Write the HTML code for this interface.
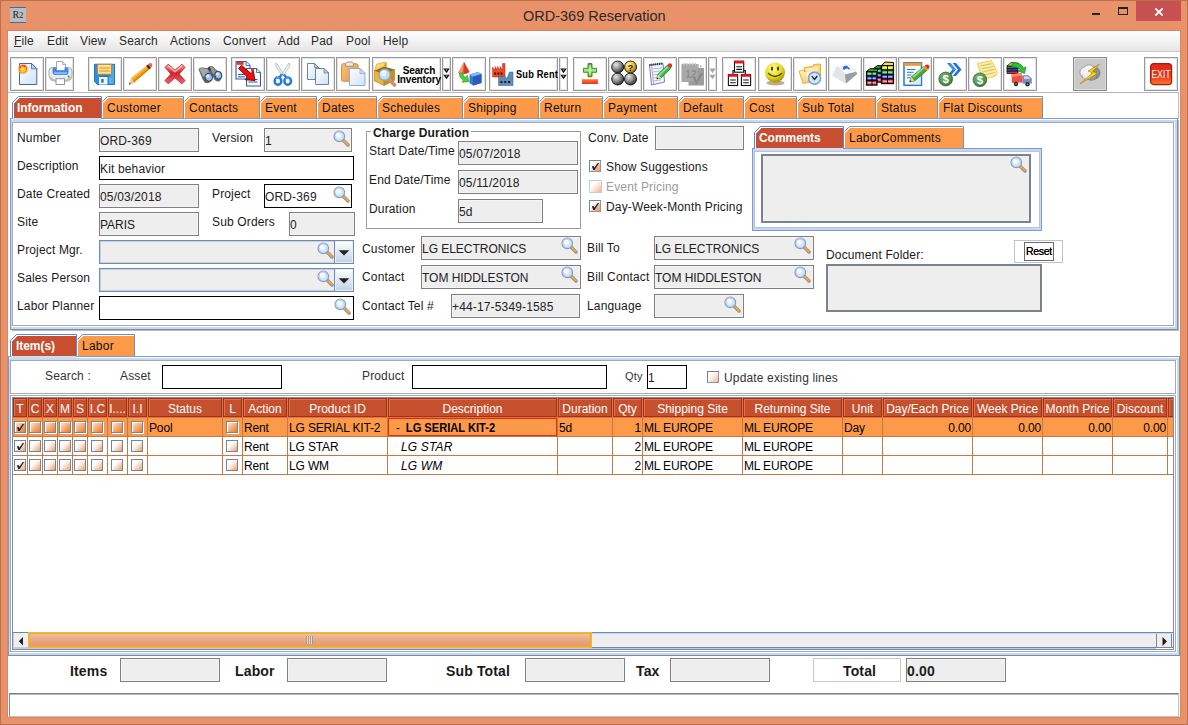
<!DOCTYPE html><html><head><meta charset="utf-8"><title>ORD-369 Reservation</title><style>
*{box-sizing:border-box;margin:0;padding:0}
html,body{width:1188px;height:725px;overflow:hidden;background:#E99168;font-family:"Liberation Sans",sans-serif;font-size:12px;color:#1a1a1a;letter-spacing:0.15px}
.a{position:absolute}
.t{position:absolute;white-space:nowrap;line-height:14px;height:14px}
.f{position:absolute;background:#EEEEEE;border:1px solid #808080;box-shadow:inset 0 0 0 1px #f4f4f4;white-space:nowrap;overflow:hidden;padding:5px 0 0 0px;line-height:14px;color:#222}
.fw{position:absolute;background:#fff;border:1px solid #000;white-space:nowrap;overflow:hidden;padding:5px 0 0 0px;line-height:14px;color:#222}
.fb{position:absolute;background:#EEEEEE;border:1px solid #7189ab;box-shadow:inset 0 0 0 1px #c3d3e8;}
.tb{position:absolute;top:57px;height:34px;background:#fff;border:1px solid #9a9a9a;box-shadow:inset 0 0 0 1px #e4e4e4}
.cb{position:absolute;width:12px;height:12px;border:1px solid #6f869e;background:linear-gradient(135deg,#fde4d2 8%,#f9c29b 35%,#f39a57 70%,#ef8232 95%);box-shadow:1px 1px 0 #fff,inset 1px 1px 0 #fff}
.cbw{position:absolute;width:12px;height:12px;border:1px solid #6f869e;background:linear-gradient(135deg,#ffffff 30%,#fdebdf 50%,#f8c4a0 75%,#f3a36c 98%);box-shadow:inset 1px 1px 0 #fff}
.cbf{position:absolute;width:12px;height:12px;border:1px solid #6f8399;border-right-color:#8796aa;border-bottom-color:#8796aa;background:linear-gradient(135deg,#ffffff 25%,#fde3d0 50%,#f6b080 75%,#f19555 100%);box-shadow:inset 1px 1px 0 #fff}
.hd{position:absolute;top:398px;height:19px;background:#C5502E;border:1px solid #8c3a22;box-shadow:inset 1px 1px 0 #f5693a;color:#fff;font-size:12px;line-height:20px;text-align:center;white-space:nowrap;overflow:hidden;letter-spacing:0}
.c{position:absolute;height:19px;line-height:23px;letter-spacing:-0.15px;font-size:12px;color:#000;white-space:nowrap;overflow:hidden}
.b{font-weight:bold}
</style></head><body>
<svg width="0" height="0" style="position:absolute"><defs><linearGradient id="gdoc" x1="0" y1="0" x2="1" y2="1"><stop offset="0" stop-color="#ffffff"/><stop offset="1" stop-color="#cfe1f5"/></linearGradient><linearGradient id="gblue" x1="0" y1="0" x2="1" y2="0"><stop offset="0" stop-color="#2a95e8"/><stop offset=".6" stop-color="#1878cf"/><stop offset="1" stop-color="#5cb6f2"/></linearGradient><radialGradient id="gball" cx=".35" cy=".3" r=".75"><stop offset="0" stop-color="#e8e8e8"/><stop offset=".55" stop-color="#8a8a8a"/><stop offset="1" stop-color="#2a2a2a"/></radialGradient><radialGradient id="gyball" cx=".35" cy=".3" r=".75"><stop offset="0" stop-color="#fff2a0"/><stop offset=".6" stop-color="#f0b820"/><stop offset="1" stop-color="#7a5a10"/></radialGradient><radialGradient id="gsmile" cx=".4" cy=".3" r=".8"><stop offset="0" stop-color="#fdfb9a"/><stop offset=".55" stop-color="#e9d91c"/><stop offset="1" stop-color="#8a7a08"/></radialGradient><radialGradient id="gcoin" cx=".4" cy=".35" r=".75"><stop offset="0" stop-color="#7fb878"/><stop offset=".7" stop-color="#4d8a48"/><stop offset="1" stop-color="#2f6a2c"/></radialGradient><linearGradient id="gx" x1="0" y1="0" x2="0" y2="1"><stop offset="0" stop-color="#f7b0b3"/><stop offset=".45" stop-color="#d81e26"/><stop offset="1" stop-color="#e86a70"/></linearGradient><linearGradient id="gplus" x1="0" y1="0" x2="0" y2="1"><stop offset="0" stop-color="#3f9e1e"/><stop offset=".5" stop-color="#b9e89a"/><stop offset="1" stop-color="#3f9e1e"/></linearGradient><linearGradient id="gminus" x1="0" y1="0" x2="0" y2="1"><stop offset="0" stop-color="#ff7a4a"/><stop offset="1" stop-color="#e8321c"/></linearGradient><linearGradient id="gclip" x1="0" y1="0" x2="1" y2="1"><stop offset="0" stop-color="#f8c07a"/><stop offset="1" stop-color="#ec9a3e"/></linearGradient><linearGradient id="gfold" x1="0" y1="0" x2="0" y2="1"><stop offset="0" stop-color="#fff3c0"/><stop offset="1" stop-color="#f6cf6a"/></linearGradient><linearGradient id="gexit" x1="0" y1="0" x2="0" y2="1"><stop offset="0" stop-color="#e02818"/><stop offset=".6" stop-color="#ec3a1a"/><stop offset="1" stop-color="#f8782a"/></linearGradient></defs></svg>
<div class="a" style="left:0;top:0;width:1188px;height:725px;border:1px solid #b9714f;background:#E99168"></div>
<div class="t" style="left:523px;top:7px;font-size:14.5px;letter-spacing:0;line-height:18px;height:18px;color:#2a2a2a">ORD-369 Reservation</div>
<div class="a" style="left:10px;top:7px;width:16px;height:16px;background:#b9bcc0;border-top:1px solid #3a6ea8;border-bottom:1px solid #3a6ea8;font-family:'Liberation Serif',serif;font-size:10px;line-height:14px;color:#222;text-align:center">R<span style="font-size:8px">2</span></div>
<div class="a" style="left:1136px;top:1px;width:45px;height:20px;background:#C75050"></div>
<svg class="a" style="left:1136px;top:1px" width="45" height="20"><path d="M19.300 7.300l7.400 7.200M26.700 7.300l-7.400 7.200" stroke="#fff" stroke-width="1.800"/></svg>
<div class="a" style="left:1118px;top:7px;width:10px;height:8px;border:1px solid #222;border-top-width:2px"></div>
<div class="a" style="left:1092px;top:13px;width:8px;height:2px;background:#222"></div>
<div class="a" style="left:7px;top:30px;width:1174px;height:688px;background:#fff;border:1px solid #dc865f"></div>
<div class="a" style="left:8px;top:31px;width:1172px;height:21px;background:linear-gradient(#ffffff,#e6e6e6);border-bottom:1px solid #c8c8c8"></div>
<div class="t" style="left:14px;top:34px;font-size:12px;color:#2a2a2a"><u>F</u>ile</div>
<div class="t" style="left:47px;top:34px;font-size:12px;color:#2a2a2a">Edit</div>
<div class="t" style="left:80px;top:34px;font-size:12px;color:#2a2a2a">View</div>
<div class="t" style="left:119px;top:34px;font-size:12px;color:#2a2a2a">Search</div>
<div class="t" style="left:170px;top:34px;font-size:12px;color:#2a2a2a">Actions</div>
<div class="t" style="left:223px;top:34px;font-size:12px;color:#2a2a2a">Convert</div>
<div class="t" style="left:278px;top:34px;font-size:12px;color:#2a2a2a">Add</div>
<div class="t" style="left:311px;top:34px;font-size:12px;color:#2a2a2a">Pad</div>
<div class="t" style="left:346px;top:34px;font-size:12px;color:#2a2a2a">Pool</div>
<div class="t" style="left:383px;top:34px;font-size:12px;color:#2a2a2a">Help</div>
<div class="a" style="left:8px;top:92px;width:1171px;height:1px;background:#b5b5b5"></div>
<div class="a" style="left:1178px;top:93px;width:1px;height:26px;background:#c2c2c2"></div>
<div class="tb" style="left:10px;width:34px;background:#fff;"><svg class="a" style="left:4.0px;top:4.0px;overflow:visible" width="24" height="24" viewBox="0 0 24 24"><path d="M4.500 1.500h12.300l5 5v16h-17.300z" fill="url(#gdoc)" stroke="#4a64a0"/><path d="M16.500 1.500v5.300h5.300z" fill="#b9d2ee" stroke="#4a64a0" stroke-width=".8"/><circle cx="8" cy="7" r="5.300" fill="#f89a5a" opacity=".55"/><circle cx="8" cy="7" r="3.900" fill="#f03a1a"/><path d="M8 3.200l1 2.400 2.500-.8-.9 2.400 2.200 1.200-2.400.8.500 2.500-2.300-1.200-1.600 2-.6-2.500-2.600.1 1.500-2-1.900-1.700 2.500-.5-.1-2.500 2.100 1.400z" fill="#f9c21c"/><circle cx="8" cy="7" r="1.600" fill="#ffe95a"/></svg></div>
<div class="tb" style="left:45px;width:29px;background:#fff;"><svg class="a" style="left:1.5px;top:4.0px;overflow:visible" width="24" height="24" viewBox="0 0 24 24"><path d="M8.500 -.5h6l3 3v6h-9z" fill="#fff" stroke="#9a9a9a" stroke-width=".9"/><path d="M14.500 -.5v3h3" fill="#e6e6e6" stroke="#9a9a9a" stroke-width=".7"/><path d="M1 9q0-3.500 3.500-3.500h4v3h9v-3h3q3.500 0 3.500 3.500v4q0 6-6 6h-11q-6 0-6-6z" fill="#e9ecee" stroke="#9aa0a6" stroke-width=".9"/><path d="M4.500 7q0-1.500 2-1.500h2v3h8v-3h2q2 0 2 1.500v3q0 3-3 3h-10q-3 0-3-3z" fill="#3f86ea"/><path d="M5.500 10.200h14q-.5 2-2.500 2h-9q-2 0-2.500-2z" fill="#8ebcf6"/><path d="M2 14q4 4.500 10.500 4.500t10.500-4.500v1q-1 4.500-6 4.500h-9q-5 0-6-4.500z" fill="#b9bec4"/><rect x="8" y="16.700" width="8.500" height="5.800" fill="#fff" stroke="#8a8a8a" stroke-width=".9"/><circle cx="20.600" cy="14.600" r="1" fill="#22a838"/></svg></div>
<div class="tb" style="left:88px;width:34px;background:#fff;"><svg class="a" style="left:4.0px;top:4.0px;overflow:visible" width="24" height="24" viewBox="0 0 24 24"><path d="M1.500 2.300h20v20.200h-17l-3-3z" fill="url(#gblue)" stroke="#1466b8" stroke-width=".9"/><rect x="4.500" y="2.300" width="14" height="10" fill="#fce2a6" stroke="#c98428" stroke-width="1.100"/><path d="M6.200 6h10.600M6.200 9h10.600" stroke="#f2a630" stroke-width="1.500"/><rect x="6" y="15" width="8.500" height="7.500" fill="#eef5fc"/><rect x="8.300" y="17" width="2.300" height="3.600" fill="#1a6ad0"/><rect x="16" y="15" width="2.500" height="7" fill="#6fc0f5" opacity=".7"/></svg></div>
<div class="tb" style="left:123px;width:34px;background:#fff;"><svg class="a" style="left:4.0px;top:4.0px;overflow:visible" width="24" height="24" viewBox="0 0 24 24"><path d="M2.500 20l5-9-3 10z" fill="#d0d0d0" opacity=".7"/><path d="M1 22.800l2.200-6.800L19.500 3l3 3.200L5.800 20.800z" fill="#f5a010"/><path d="M3.200 16L19.500 3l1 1.100L4.400 17.600z" fill="#fbc04a"/><path d="M5 19.300L21.500 5.200l1 1L5.800 20.800z" fill="#d8860a"/><path d="M1 22.800l2.200-6.800 2.600 4.800z" fill="#f0cfa8"/><path d="M1 22.800l.8-2.500 1.100 1.800z" fill="#3a3a3a"/><path d="M18.200 4l1.800-1.500 3 3.200-1.800 1.500z" fill="#2a2a2a"/><path d="M20 2.500l1.500-1.200q1.800-.8 2.600 1l.2 1.800-1.300 1.600z" fill="#f2643a"/></svg></div>
<div class="tb" style="left:158px;width:34px;background:#fff;"><svg class="a" style="left:4.0px;top:4.0px;overflow:visible" width="24" height="24" viewBox="0 0 24 24"><path d="M5.200 2.200L12 8.200l6.800-6 3.200 3.200L16 12l6 6.600-3.200 3.200L12 15.800l-6.800 6L2 18.600 8 12 2 5.400z" fill="url(#gx)" stroke="#c0202a" stroke-width=".9" stroke-linejoin="round"/><path d="M5.300 3.800L12 9.800l6.700-6" stroke="#fbd5d6" stroke-width="1.300" fill="none" opacity=".8"/></svg></div>
<div class="tb" style="left:193px;width:34px;background:#fff;"><svg class="a" style="left:4.0px;top:4.0px;overflow:visible" width="24" height="24" viewBox="0 0 24 24"><path d="M.5 7.500q1-2.500 4-2l5 .8 1.500-1.800q2-1 4 0l2 2.300 6 4.500q2 2.500.5 5.500l-2 2.500q-3 1-5-1.500l-1.500-3-1.500 1.500-1 3.500q-2.500 2.500-6 .8l-2-3.500z" fill="#63666a"/><path d="M1.500 7.500q1-1.500 3-1.200l5 .9 3.500 6.300-2 3-6-2z" fill="#a4a8ac"/><path d="M11.500 5q1.500-.8 3 0l1.800 2 5 4-3 2-4-2z" fill="#92969a"/><path d="M9.500 6.200l2-1.500 1.500 3-1 1.500z" fill="#3a3c3e"/><ellipse cx="10.700" cy="15.200" rx="3.700" ry="4" fill="#8ec3f4" stroke="#3e4144" stroke-width="1.100" transform="rotate(-20 10.700 15.200)"/><ellipse cx="20.300" cy="13.200" rx="3.400" ry="3.800" fill="#8ec3f4" stroke="#3e4144" stroke-width="1.100" transform="rotate(-20 20.300 13.200)"/><circle cx="9.800" cy="14" r="1.500" fill="#d6ebfc"/><circle cx="19.500" cy="12" r="1.400" fill="#d6ebfc"/></svg></div>
<div class="tb" style="left:231px;width:34px;background:#fff;"><svg class="a" style="left:4.0px;top:4.0px;overflow:visible" width="24" height="24" viewBox="0 0 24 24"><path d="M0 -.5h10l4 4v13.500h-14z" fill="#f6f9fd" stroke="#3a5aa0" stroke-width="1.100"/><path d="M10 -.5v4h4" fill="#dde8f5" stroke="#3a5aa0" stroke-width=".8"/><rect x=".6" y="0" width="7" height="2.800" fill="#f03020"/><path d="M2 12.500h9M2 14.800h7" stroke="#3a5aa0" stroke-width="1"/><path d="M10.500 6.500h10l4 4v13.500h-14z" fill="#f6f9fd" stroke="#3a5aa0" stroke-width="1.100"/><path d="M20.500 6.500v4h4" fill="#dde8f5" stroke="#3a5aa0" stroke-width=".8"/><rect x="15" y="7" width="3" height="2.500" fill="#f03020"/><path d="M12.500 17.500h9M12.500 20h9M12.500 13h5" stroke="#3a5aa0" stroke-width="1"/><path d="M2.500 6.500l3-3.200 9.500 8.200 2.300-2.500 1.700 9.500-9.800-.8 2.400-2.600z" fill="#f40c0c" stroke="#5a0808" stroke-width=".9" stroke-linejoin="round"/></svg></div>
<div class="tb" style="left:266px;width:34px;background:#fff;"><svg class="a" style="left:4.0px;top:4.0px;overflow:visible" width="24" height="24" viewBox="0 0 24 24"><path d="M5.200 .8q-1.200 1-.3 3.500l6.200 9.500 1.800-1.500z" fill="#eceef0" stroke="#a9adb3" stroke-width=".7"/><path d="M18.200 .8q1.200 1 .3 3.500l-6.200 9.500-1.800-1.500z" fill="#f6f7f8" stroke="#a9adb3" stroke-width=".7"/><circle cx="11.800" cy="12.300" r=".9" fill="#8a8e94"/><path d="M10.600 12.500l-2.500 3.500M13 12.500l2.500 3.500" stroke="#2a7ee0" stroke-width="2.200"/><ellipse cx="7" cy="19.200" rx="3.300" ry="3.600" fill="none" stroke="#1f7ae0" stroke-width="2.500"/><ellipse cx="16.700" cy="19.200" rx="3.300" ry="3.600" fill="none" stroke="#1f7ae0" stroke-width="2.500"/><path d="M4.500 17.500q1.500-2.500 4-1.500M14.200 17.500q1.500-2.500 4-1.500" stroke="#7fb8f4" stroke-width="1" fill="none"/></svg></div>
<div class="tb" style="left:301px;width:34px;background:#fff;"><svg class="a" style="left:4.0px;top:4.0px;overflow:visible" width="24" height="24" viewBox="0 0 24 24"><path d="M1.500 1.500h7l4 4v12h-11z" fill="url(#gdoc)" stroke="#5a74a8" stroke-width=".9"/><path d="M8.500 1.500v4h4z" fill="#b9d2ee" stroke="#5a74a8" stroke-width=".7"/><path d="M9.500 6.500h8.500l4.500 4.500v11.500h-13z" fill="url(#gdoc)" stroke="#5a74a8" stroke-width=".9"/><path d="M18 6.500v4.500h4.500z" fill="#b9d2ee" stroke="#5a74a8" stroke-width=".7"/></svg></div>
<div class="tb" style="left:336px;width:34px;background:#fff;"><svg class="a" style="left:4.0px;top:4.0px;overflow:visible" width="24" height="24" viewBox="0 0 24 24"><rect x=".5" y="1.700" width="16.600" height="17.600" rx="1.800" fill="url(#gclip)" stroke="#c98a3a" stroke-width=".9"/><path d="M4.500 4.200v-2.500l1.500-1.700h5l1.500 1.700v2.500z" fill="#eceae4" stroke="#8a8474" stroke-width=".8"/><path d="M8.500 6.500h10.500l5 5v12h-15.500z" fill="url(#gdoc)" stroke="#8aa0d8" stroke-width=".9"/><path d="M19 6.500v5h5z" fill="#cfe0f5" stroke="#8aa0d8" stroke-width=".7"/></svg></div>
<div class="tb" style="left:372px;width:69px;background:#fff;"><svg class="a" style="left:1px;top:3px" width="24" height="26" viewBox="0 0 24 26"><path d="M0.500 9.500L10 13.500V24.500L0.500 20Z" fill="#ecb736"/><path d="M10 13.500L20.500 8.500V19.500L10 24.500Z" fill="#c98f1c"/><path d="M0.500 9.500L10 5.500L20.500 8.500L10 13.500Z" fill="#9a6a10"/><path d="M0.500 9.500L2.500 3L11.500 1L10 5.500Z" fill="#f8d868" stroke="#c99a2a" stroke-width=".5"/><path d="M10 5.500L11.500 1L13 2.500L12.500 6.200Z" fill="#d8a32a"/><path d="M0.500 9.500L10 13.500V24.500L0.500 20ZM10 13.500L20.500 8.500V19.500L10 24.500" fill="none" stroke="#a87a14" stroke-width=".6"/><path d="M14.500 17.800l6 6.200" stroke="#9a9da3" stroke-width="3.600" stroke-linecap="round"/><path d="M15.600 19l4.800 4.900" stroke="#f08a3a" stroke-width="2.200" stroke-linecap="round"/><circle cx="10.600" cy="13.700" r="5.600" fill="#bfe0f2" stroke="#8fa6bd" stroke-width="1.400"/><circle cx="9.400" cy="12.400" r="2.800" fill="#e8f6fd"/></svg><div class="a b" style="left:23px;top:8px;width:46px;font-size:10px;line-height:9px;color:#000;text-align:center;letter-spacing:-0.150px">Search<br>Inventory</div></div>
<div class="tb" style="left:442px;width:9px;background:#fff;"><svg class="a" style="left:0px;top:10px" width="7" height="12" viewBox="0 0 7 12"><path d="M0.300 0.500h6.400l-3.200 4.700zM0.300 6.700h6.400l-3.200 4.500z" fill="#111"/><path d="M2.600 1.400h1.800l-.9 1.300zM2.600 7.600h1.800l-.9 1.300z" fill="#fff" opacity=".8"/></svg></div>
<div class="tb" style="left:452px;width:34px;background:#fff;"><svg class="a" style="left:4.0px;top:4.0px;overflow:visible" width="24" height="24" viewBox="0 0 24 24"><path d="M7 0l5.500 10q-5.500 3.500-11.500 1z" fill="#f05a3a"/><path d="M7 0l5.500 10q-2.500 1.800-5.500 2z" fill="#d83a1e"/><path d="M7 0L1 11q2 1 4 1.200z" fill="#fa9a7a"/><path d="M12.500 12.500l8.500-2.500 3.500 2v9l-8.500 2.500-3.500-2.500z" fill="#3a78d8"/><path d="M12.500 12.500l8.500-2.500 3.500 2-8.500 2.800z" fill="#86b6f4"/><path d="M16 14.800l8.500-2.800v9l-8.500 2.500z" fill="#2a5cb8"/><path d="M2.500 11q-.5 5 4 7l-1.500 2.200 7-.5-1.800-6.500-1.700 2.300q-2.500-1.500-2.500-4.500z" fill="#4ccc3a" stroke="#2a9a22" stroke-width=".6"/></svg></div>
<div class="tb" style="left:489px;width:69px;background:#fff;"><svg class="a" style="left:2px;top:5px" width="24" height="23" viewBox="0 0 24 23"><path d="M0.500 14V4l2.500 3V3.500l2.500 3.500V3.500l2.500 3.500V3.500l2.500 3.500V0.500h2.500V14z" fill="#f4461f" stroke="#b82a12" stroke-width=".5"/><path d="M2.300 10.500h1.800M5.500 10.500h1.800M8.700 10.500h1.800" stroke="#111" stroke-width="1.900"/><path d="M6.500 22.500V12.500l2.800 3v-3l2.800 3v-3l2.800 3L17.500 9h3.500V22.500z" fill="#5f8db5" stroke="#2f5f88" stroke-width=".5"/><path d="M8.500 19h1.900M12.300 19h1.900M16.100 19h1.900" stroke="#111" stroke-width="1.900"/></svg><div class="a b" style="left:22px;top:9px;width:50px;text-align:center;font-size:10.500px;line-height:14px;color:#000;white-space:nowrap;letter-spacing:0.200px;transform:scaleX(.88)">Sub Rent</div></div>
<div class="tb" style="left:559px;width:9px;background:#fff;"><svg class="a" style="left:0px;top:10px" width="7" height="12" viewBox="0 0 7 12"><path d="M0.300 0.500h6.400l-3.200 4.700zM0.300 6.700h6.400l-3.200 4.500z" fill="#111"/><path d="M2.600 1.400h1.800l-.9 1.300zM2.600 7.600h1.800l-.9 1.300z" fill="#fff" opacity=".8"/></svg></div>
<div class="tb" style="left:573px;width:34px;background:#fff;"><svg class="a" style="left:4.0px;top:4.0px;overflow:visible" width="24" height="24" viewBox="0 0 24 24"><path d="M10 1.600h4v4.700h4.500v4h-4.500v4.500h-4v-4.500h-4.500v-4h4.500z" fill="url(#gplus)" stroke="#2f8a14" stroke-width=".9"/><path d="M11.300 2.800h1.400v10.800h-1.400z" fill="#dcf5cb" opacity=".8"/><rect x="4" y="17.200" width="16" height="4.800" fill="url(#gminus)"/></svg></div>
<div class="tb" style="left:608px;width:34px;background:#fff;"><svg class="a" style="left:4.0px;top:4.0px;overflow:visible" width="24" height="24" viewBox="0 0 24 24"><circle cx="4.7" cy="17" r="6" fill="url(#gball)" stroke="#111" stroke-width=".9"/><circle cx="17.5" cy="17" r="6" fill="url(#gball)" stroke="#111" stroke-width=".9"/><circle cx="4.7" cy="5" r="6" fill="url(#gball)" stroke="#111" stroke-width=".9"/><circle cx="17.5" cy="5" r="6" fill="url(#gyball)" stroke="#111" stroke-width=".9"/><text x="17.600" y="8.600" font-size="9.500" font-weight="bold" text-anchor="middle" fill="#1a1a1a" font-family="Liberation Sans">?</text></svg></div>
<div class="tb" style="left:643px;width:34px;background:#fff;"><svg class="a" style="left:4.0px;top:4.0px;overflow:visible" width="24" height="24" viewBox="0 0 24 24"><path d="M1.500 3l13.500-1.500 1.500 18.500-13 3z" fill="#f4f7fc" stroke="#6a7fc8" stroke-width="1"/><path d="M4.200 7l10-1.200M4.500 10l10-1.200M4.800 13l6-.8M5 16l5-.6M5.200 19l8-1.200" stroke="#9ab6ea" stroke-width=".9"/><path d="M3.600 3.500l2 19" stroke="#ee8a8a" stroke-width=".9"/><path d="M1.500 3l13.500-1.500" stroke="#2a2a2a" stroke-width="2.200" stroke-dasharray="1 .9"/><path d="M8.800 17l1-4.600 9.700-9.400 3.300 3.300-9.600 9.600z" fill="#3db54a" stroke="#1e7a2a" stroke-width=".7"/><path d="M10.500 12.800l8.700-8.500 1.200 1.200-8.800 8.600z" fill="#8fe08a"/><path d="M19.500 3l1.400-1.400q1.400-.8 2.600.4t.5 2.600l-1.200 1.700z" fill="#e8281e"/><path d="M8.800 17l1-4.600 3.400 3.500z" fill="#f0d9b0"/><path d="M8.800 17l.4-1.700 1.300 1.200z" fill="#222"/></svg></div>
<div class="tb" style="left:678px;width:29px;background:#fff;"><svg class="a" style="left:1.5px;top:4.0px;overflow:visible" width="24" height="24" viewBox="0 0 24 24"><rect x=".5" y="2" width="17" height="18" fill="#a6a6a6"/><rect x="7.500" y="6" width="15.500" height="17.500" fill="#9c9c9c"/><rect x="1.500" y="4.500" width="15" height="14.500" fill="#a9a9a9"/><path d="M3 3.500v-2.500M5.800 3.500v-2.500M8.600 3.500v-2.500M11.400 3.500v-2.500M14.200 3.500v-2.500M17 5v-2.500M19.800 5.500v-2.500" stroke="#c4c4c4" stroke-width="1.500"/><text x="10" y="15.500" font-size="10" fill="#8e8e8e" font-family="Liberation Sans" text-anchor="middle" font-weight="bold">12</text><path d="M12.500 15l3 5.500 5.500-9.500" stroke="#8a8a8a" stroke-width="2.200" fill="none"/></svg></div>
<div class="tb" style="left:708px;width:9px;background:#fff;"><svg class="a" style="left:0px;top:10px" width="7" height="12" viewBox="0 0 7 12"><path d="M0.300 0.500h6.400l-3.200 4.700zM0.300 6.700h6.400l-3.200 4.500z" fill="#a8a8a8"/></svg></div>
<div class="tb" style="left:722px;width:34px;background:#fff;"><svg class="a" style="left:4.0px;top:4.0px;overflow:visible" width="24" height="24" viewBox="0 0 24 24"><path d="M12 8v2.500M6 13v-4.500h12.300v4.500" stroke="#111" fill="none" stroke-width="1.200"/><rect x="7.5" y="-0.8" width="9.200" height="11" fill="#fff" stroke="#111" stroke-width="1.100"/><rect x="7.5" y="-1.1" width="9.200" height="2.600" fill="#f0141e"/><path d="M9.3 4.7h5.600M9.3 7.3999999999999995h5.600" stroke="#111" stroke-width="1.100"/><rect x="1.4" y="12.5" width="9.200" height="11" fill="#fff" stroke="#111" stroke-width="1.100"/><rect x="1.4" y="12.2" width="9.200" height="2.600" fill="#f0141e"/><path d="M3.2 18.0h5.600M3.2 20.7h5.600" stroke="#111" stroke-width="1.100"/><rect x="14.4" y="12.5" width="9.200" height="11" fill="#fff" stroke="#111" stroke-width="1.100"/><rect x="14.4" y="12.2" width="9.200" height="2.600" fill="#f0141e"/><path d="M16.2 18.0h5.600M16.2 20.7h5.600" stroke="#111" stroke-width="1.100"/></svg></div>
<div class="tb" style="left:758px;width:34px;background:#fff;"><svg class="a" style="left:4.0px;top:4.0px;overflow:visible" width="24" height="24" viewBox="0 0 24 24"><ellipse cx="12.500" cy="21" rx="9" ry="2.600" fill="#8a6a28" opacity=".55"/><circle cx="12" cy="10.500" r="10" fill="url(#gsmile)"/><ellipse cx="9" cy="6.700" rx="1.100" ry="2.100" fill="#4a4208"/><ellipse cx="15" cy="6.700" rx="1.100" ry="2.100" fill="#4a4208"/><path d="M5.500 11.500q6.500 6 13 0" stroke="#4a4208" stroke-width="1.400" fill="none" stroke-linecap="round"/></svg></div>
<div class="tb" style="left:793px;width:34px;background:#fff;"><svg class="a" style="left:4.0px;top:4.0px;overflow:visible" width="24" height="24" viewBox="0 0 24 24"><path d="M6 5.500l9-1 .5-2 7-.500v15l-14 3z" fill="#f8d878" stroke="#d8a020" stroke-width=".8"/><path d="M1 9l4.500-.8 1 1.500 12-2 1.500 11-15 2.800z" fill="url(#gfold)" stroke="#e0a428" stroke-width=".8"/><path d="M8 6.500l12-1.500v10l-11 3z" fill="#fff6cf" opacity=".7"/><circle cx="16.500" cy="16.200" r="6" fill="#e4f2fd" stroke="#7f9ed8" stroke-width="1.700"/><circle cx="16.500" cy="16.200" r="4.300" fill="#cfe6fa"/><path d="M13.800 14.200l2.700 3.200 2.800-3.400" stroke="#1a1a2a" stroke-width="1.300" fill="none"/></svg></div>
<div class="tb" style="left:828px;width:34px;background:#fff;"><svg class="a" style="left:4.0px;top:4.0px;overflow:visible" width="24" height="24" viewBox="0 0 24 24"><path d="M-.5 13.500l4.500-9 12-2.500 8.500 9.500-11.500 10z" fill="#c4c7cb"/><path d="M4.500 4l11.500-2.200 6.500 8.200-10.500 2.500z" fill="#fafafa"/><path d="M-.5 13.500l5-9.500 7.500 8.500 1 9z" fill="#e2e4e7"/><path d="M12 12.500l10.500-2.500 2 1.500-11.500 10z" fill="#9a9da3"/><path d="M9.500 7l1-2.800 3.200-.6 3.800 3.400-1.900.4-1-1-2.600.5-.4 1.100z" fill="#2a72e0"/></svg></div>
<div class="tb" style="left:863px;width:34px;background:#fff;"><svg class="a" style="left:4.0px;top:4.0px;overflow:visible" width="24" height="24" viewBox="0 0 24 24"><rect x="6" y="6.5" width="8" height="4.600" fill="#1f9a2a" stroke="#0a0a0a" stroke-width="1.200"/><rect x="7.2" y="8.0" width="5.6" height="1.600" fill="#9ae89a" opacity=".85"/><rect x="6" y="11" width="8" height="4.600" fill="#2a3ad8" stroke="#0a0a0a" stroke-width="1.200"/><rect x="7.2" y="12.5" width="5.6" height="1.600" fill="#b8c0ff" opacity=".85"/><rect x="6" y="15.5" width="8" height="4.600" fill="#d82a2a" stroke="#0a0a0a" stroke-width="1.200"/><rect x="7.2" y="17.0" width="5.6" height="1.600" fill="#ffc0c0" opacity=".85"/><path d="M5.500 6.500l4-3 5 .5-3.500 3z" fill="#1f9a2a" stroke="#0a0a0a" stroke-width="1"/><rect x="-1.5" y="9.5" width="10.5" height="4.600" fill="#1f9a2a" stroke="#0a0a0a" stroke-width="1.200"/><rect x="-0.30000000000000004" y="11.0" width="8.1" height="1.600" fill="#a8eea8" opacity=".85"/><rect x="-1.5" y="14" width="10.5" height="4.600" fill="#2a3ad8" stroke="#0a0a0a" stroke-width="1.200"/><rect x="-0.30000000000000004" y="15.5" width="8.1" height="1.600" fill="#c0c6ff" opacity=".85"/><rect x="-1.5" y="18.5" width="10.5" height="4.600" fill="#d82a2a" stroke="#0a0a0a" stroke-width="1.200"/><rect x="-0.30000000000000004" y="20.0" width="8.1" height="1.600" fill="#ffc6c6" opacity=".85"/><path d="M-1.500 9.500l3.500-2.800 8 .3-1 2.500z" fill="#2fae3a" stroke="#0a0a0a" stroke-width="1"/><rect x="13.5" y="3.5" width="12" height="4.600" fill="#d8d020" stroke="#0a0a0a" stroke-width="1.200"/><rect x="14.7" y="5.0" width="9.6" height="1.600" fill="#fffbb0" opacity=".85"/><rect x="13.5" y="8" width="12" height="4.600" fill="#1f9a2a" stroke="#0a0a0a" stroke-width="1.200"/><rect x="14.7" y="9.5" width="9.6" height="1.600" fill="#a8eea8" opacity=".85"/><rect x="13.5" y="12.5" width="12" height="4.600" fill="#2a3ad8" stroke="#0a0a0a" stroke-width="1.200"/><rect x="14.7" y="14.0" width="9.6" height="1.600" fill="#c0c6ff" opacity=".85"/><rect x="13.5" y="17" width="12" height="4.600" fill="#d82a2a" stroke="#0a0a0a" stroke-width="1.200"/><rect x="14.7" y="18.5" width="9.6" height="1.600" fill="#ffc6c6" opacity=".85"/><path d="M13.500 3.500l3.500-3.500 8.500.5v3z" fill="#e8e040" stroke="#0a0a0a" stroke-width="1"/><path d="M4 9.800v13.500M19.500 3.800v18" stroke="#0a0a0a" stroke-width="1"/></svg></div>
<div class="tb" style="left:898px;width:34px;background:#fff;"><svg class="a" style="left:4.0px;top:4.0px;overflow:visible" width="24" height="24" viewBox="0 0 24 24"><rect x="1" y=".8" width="17.500" height="22.500" fill="#f8fbff" stroke="#2a7ad8" stroke-width="1.500"/><rect x="1" y=".8" width="17.500" height="3" fill="#f8962a"/><path d="M10 14l8 0v8.500h-8z" fill="#d6e4f8" opacity=".7"/><path d="M4 7.500h8.500M4 10.300h6.500M4 13h4.500M4 15.800h3.500" stroke="#2a7ad8" stroke-width="1"/><path d="M6.600 20l1.700-5.200L21 4.500l3.200 3.700L11.500 19z" fill="#4aa83a" stroke="#2a6a22" stroke-width=".7"/><path d="M9.600 14.300L21 4.500l1.100 1.200-11.500 10z" fill="#9ade8a"/><path d="M20.300 5l1.500-1.300 3.300 3.800-1.500 1.300z" fill="#e8a020"/><path d="M21.800 3.700l1.200-1q1.700-.8 2.900.6t.2 2.900l-1 1.300z" fill="#e8281e"/><path d="M6.600 20l1.700-5.200 3.200 4.200z" fill="#f2cf8a"/><path d="M6.600 20l.7-2.100 1.300 1.500z" fill="#222"/></svg></div>
<div class="tb" style="left:933px;width:34px;background:#fff;"><svg class="a" style="left:4.0px;top:4.0px;overflow:visible" width="24" height="24" viewBox="0 0 24 24"><path d="M9 1h3.500l5.500 6.500-5.500 6.500h-3.500l5.500-6.500z" fill="#1f74e0"/><path d="M14.500 1h3.500l5.500 6.500-5.500 6.500h-3.500l5.500-6.500z" fill="#1f74e0"/><path d="M10.500 1.500h1.500l5 6-1.200 1.300z" fill="#6aa8f6" opacity=".7"/><circle cx="7.7" cy="17" r="6.900" fill="url(#gcoin)" stroke="#3a7236" stroke-width=".8"/><text x="7.7" y="21.1" font-size="11.500" font-weight="bold" text-anchor="middle" fill="#fff" font-family="Liberation Sans">$</text></svg></div>
<div class="tb" style="left:968px;width:34px;background:#fff;"><svg class="a" style="left:4.0px;top:4.0px;overflow:visible" width="24" height="24" viewBox="0 0 24 24"><path d="M4.500 1.500l14-2.800 6 12-2.500 3.500-12.500 3z" fill="#fcf0a0" stroke="#f0c23a" stroke-width=".9"/><path d="M7.500 4l11-2.400M8.500 7l11.500-2.500M9.500 10l12-2.600M10.500 13l11.500-2.500" stroke="#d8c070" stroke-width="1.100"/><circle cx="6.9" cy="17.8" r="6.900" fill="url(#gcoin)" stroke="#3a7236" stroke-width=".8"/><text x="6.9" y="21.9" font-size="11.500" font-weight="bold" text-anchor="middle" fill="#fff" font-family="Liberation Sans">$</text></svg></div>
<div class="tb" style="left:1003px;width:34px;background:#fff;"><svg class="a" style="left:4.0px;top:4.0px;overflow:visible" width="24" height="24" viewBox="0 0 24 24"><rect x="-1" y="4" width="11" height="2.600" fill="#1f9a2a" stroke="#0a0a0a" stroke-width=".7"/><rect x="-1" y="6.600" width="11" height="2.600" fill="#2a3ad8" stroke="#0a0a0a" stroke-width=".7"/><rect x="-1" y="9.200" width="11" height="2.400" fill="#d82a2a" stroke="#0a0a0a" stroke-width=".7"/><path d="M-1 4l4-3.500 7 .5 1 2-1 1z" fill="#d8d020" stroke="#0a0a0a" stroke-width=".7"/><path d="M4 2q8-3 11.500 4l2.500-1-1.500 6.500-6.500-2.500 2.300-1q-2.500-4-8.300-3z" fill="#2fc03a" stroke="#147a1e" stroke-width=".6"/><path d="M3.500 12.500l10-1.500 1 9.500-10.500.5z" fill="#f0503a"/><path d="M3.500 12.500l10-1.500.3 2.500-10.200 1.500z" fill="#fa8a78"/><path d="M14 13.500l6-.5 3.800 3.500v5l-9.300.3z" fill="#8088c0"/><path d="M16 14.500l3.800-.3 2.600 2.600-6.200.4z" fill="#d0dcf4"/><circle cx="8" cy="22" r="2.200" fill="#2a2a2a"/><circle cx="19.500" cy="22.300" r="2.200" fill="#2a2a2a"/><circle cx="8" cy="22" r=".8" fill="#aaa"/><circle cx="19.500" cy="22.300" r=".8" fill="#aaa"/></svg></div>
<div class="tb" style="left:1073px;width:34px;background:#c9c9c9;border-color:#8a8a8a;box-shadow:inset 0 0 0 1px #dcdcdc;"><svg class="a" style="left:4.0px;top:4.0px;overflow:visible" width="24" height="24" viewBox="0 0 24 24"><ellipse cx="16.500" cy="11" rx="5.500" ry="6" fill="#8e8e8e" stroke="#6a6a6a" stroke-width=".6"/><ellipse cx="13.500" cy="14.500" rx="5" ry="3.800" fill="#9a9a9a" stroke="#6a6a6a" stroke-width=".6"/><ellipse cx="7" cy="10.500" rx="5" ry="5.500" fill="#f6f6f6" stroke="#7a7a7a" stroke-width=".6"/><ellipse cx="11" cy="6.800" rx="4.800" ry="4" fill="#f4f4f4" stroke="#7a7a7a" stroke-width=".6"/><ellipse cx="9" cy="13.500" rx="5" ry="4" fill="#e4e4e4" stroke="#7a7a7a" stroke-width=".6"/><ellipse cx="8.500" cy="10" rx="5" ry="5" fill="#f2f2f2"/><ellipse cx="11" cy="7.500" rx="4" ry="3.500" fill="#f4f4f4"/><path d="M21.500 2L10 9L14.500 11L2 21.800L19.500 11.500L14.500 9.500Z" fill="#fad01c" stroke="#b08410" stroke-width=".7" stroke-linejoin="round"/></svg></div>
<div class="tb" style="left:1144px;width:34px;background:#fff;"><svg class="a" style="left:4.0px;top:4.0px;overflow:visible" width="24" height="24" viewBox="0 0 24 24"><rect x="1.600" y="1.600" width="21" height="21" rx="3.200" fill="url(#gexit)" stroke="#a81a10" stroke-width="1.200"/><text x="12.100" y="16" font-size="10" text-anchor="middle" fill="#fff" font-family="Liberation Sans" textLength="19" lengthAdjust="spacingAndGlyphs">EXIT</text></svg></div>
<div class="a" style="left:10px;top:118px;width:1168px;height:212px;background:#c5daf2;border-top:1px solid #7b9ad6;border-left:1px solid #7b9ad6;border-right:1px solid #7a8ea8;border-bottom:1px solid #7a8ea8"></div>
<div class="a" style="left:11px;top:119px;width:1166px;height:1px;background:#fff"></div>
<div class="a" style="left:1178px;top:120px;width:1px;height:211px;background:#b4b9c2"></div>
<div class="a" style="left:12px;top:330px;width:1167px;height:1px;background:#b4b9c2"></div>
<div class="a" style="left:12px;top:122px;width:1163px;height:205px;background:#fff"></div>
<div class="a" style="left:12px;top:122px;width:1162px;height:204px;border:1px solid #a9a9a9;background:#fff"></div>
<svg class="a" style="left:12px;top:96px" width="90" height="22"><path d="M2 22 V7.500 L7.500 2 H89 V22 Z" fill="#C74E2E"/><path d="M1.500 22 V7 L7 1.500 H89" fill="none" stroke="#fff" stroke-width="1"/><path d="M0.500 22 V6.500 L6.500 0.500 H89.5 V22" fill="none" stroke="#5f86d6" stroke-width="1"/></svg>
<div class="a" style="left:13px;top:118px;width:88px;height:2px;background:#cfe0f5"></div>
<div class="t b" style="left:17px;top:100px;font-size:12px;color:#fff;line-height:16px;height:16px;letter-spacing:-0.05px">Information</div>
<svg class="a" style="left:102px;top:96px" width="82" height="22"><path d="M1 22 V7 L6.500 1.500 H81 V22 Z" fill="#FD9A49"/><path d="M0.500 22 V6.500 L6 1.500 H81" fill="none" stroke="#fff" stroke-width="1"/><path d="M0.500 5.500 L5.500 0.500 H81.5 V22" fill="none" stroke="#7a8ea8" stroke-width="1"/></svg>
<div class="t" style="left:107px;top:100px;font-size:12px;color:#111;line-height:16px;height:16px;letter-spacing:0.25px">Customer</div>
<svg class="a" style="left:184px;top:96px" width="76" height="22"><path d="M1 22 V7 L6.500 1.500 H75 V22 Z" fill="#FD9A49"/><path d="M0.500 22 V6.500 L6 1.500 H75" fill="none" stroke="#fff" stroke-width="1"/><path d="M0.500 5.500 L5.500 0.500 H75.5 V22" fill="none" stroke="#7a8ea8" stroke-width="1"/></svg>
<div class="t" style="left:189px;top:100px;font-size:12px;color:#111;line-height:16px;height:16px;letter-spacing:0.25px">Contacts</div>
<svg class="a" style="left:260px;top:96px" width="57" height="22"><path d="M1 22 V7 L6.500 1.500 H56 V22 Z" fill="#FD9A49"/><path d="M0.500 22 V6.500 L6 1.500 H56" fill="none" stroke="#fff" stroke-width="1"/><path d="M0.500 5.500 L5.500 0.500 H56.5 V22" fill="none" stroke="#7a8ea8" stroke-width="1"/></svg>
<div class="t" style="left:265px;top:100px;font-size:12px;color:#111;line-height:16px;height:16px;letter-spacing:0.25px">Event</div>
<svg class="a" style="left:317px;top:96px" width="60" height="22"><path d="M1 22 V7 L6.500 1.500 H59 V22 Z" fill="#FD9A49"/><path d="M0.500 22 V6.500 L6 1.500 H59" fill="none" stroke="#fff" stroke-width="1"/><path d="M0.500 5.500 L5.500 0.500 H59.5 V22" fill="none" stroke="#7a8ea8" stroke-width="1"/></svg>
<div class="t" style="left:322px;top:100px;font-size:12px;color:#111;line-height:16px;height:16px;letter-spacing:0.25px">Dates</div>
<svg class="a" style="left:377px;top:96px" width="86" height="22"><path d="M1 22 V7 L6.500 1.500 H85 V22 Z" fill="#FD9A49"/><path d="M0.500 22 V6.500 L6 1.500 H85" fill="none" stroke="#fff" stroke-width="1"/><path d="M0.500 5.500 L5.500 0.500 H85.5 V22" fill="none" stroke="#7a8ea8" stroke-width="1"/></svg>
<div class="t" style="left:382px;top:100px;font-size:12px;color:#111;line-height:16px;height:16px;letter-spacing:0.25px">Schedules</div>
<svg class="a" style="left:463px;top:96px" width="76" height="22"><path d="M1 22 V7 L6.500 1.500 H75 V22 Z" fill="#FD9A49"/><path d="M0.500 22 V6.500 L6 1.500 H75" fill="none" stroke="#fff" stroke-width="1"/><path d="M0.500 5.500 L5.500 0.500 H75.5 V22" fill="none" stroke="#7a8ea8" stroke-width="1"/></svg>
<div class="t" style="left:468px;top:100px;font-size:12px;color:#111;line-height:16px;height:16px;letter-spacing:0.25px">Shipping</div>
<svg class="a" style="left:539px;top:96px" width="64" height="22"><path d="M1 22 V7 L6.500 1.500 H63 V22 Z" fill="#FD9A49"/><path d="M0.500 22 V6.500 L6 1.500 H63" fill="none" stroke="#fff" stroke-width="1"/><path d="M0.500 5.500 L5.500 0.500 H63.5 V22" fill="none" stroke="#7a8ea8" stroke-width="1"/></svg>
<div class="t" style="left:544px;top:100px;font-size:12px;color:#111;line-height:16px;height:16px;letter-spacing:0.25px">Return</div>
<svg class="a" style="left:603px;top:96px" width="75" height="22"><path d="M1 22 V7 L6.500 1.500 H74 V22 Z" fill="#FD9A49"/><path d="M0.500 22 V6.500 L6 1.500 H74" fill="none" stroke="#fff" stroke-width="1"/><path d="M0.500 5.500 L5.500 0.500 H74.5 V22" fill="none" stroke="#7a8ea8" stroke-width="1"/></svg>
<div class="t" style="left:608px;top:100px;font-size:12px;color:#111;line-height:16px;height:16px;letter-spacing:0.25px">Payment</div>
<svg class="a" style="left:678px;top:96px" width="66" height="22"><path d="M1 22 V7 L6.500 1.500 H65 V22 Z" fill="#FD9A49"/><path d="M0.500 22 V6.500 L6 1.500 H65" fill="none" stroke="#fff" stroke-width="1"/><path d="M0.500 5.500 L5.500 0.500 H65.5 V22" fill="none" stroke="#7a8ea8" stroke-width="1"/></svg>
<div class="t" style="left:683px;top:100px;font-size:12px;color:#111;line-height:16px;height:16px;letter-spacing:0.25px">Default</div>
<svg class="a" style="left:744px;top:96px" width="53" height="22"><path d="M1 22 V7 L6.500 1.500 H52 V22 Z" fill="#FD9A49"/><path d="M0.500 22 V6.500 L6 1.500 H52" fill="none" stroke="#fff" stroke-width="1"/><path d="M0.500 5.500 L5.500 0.500 H52.5 V22" fill="none" stroke="#7a8ea8" stroke-width="1"/></svg>
<div class="t" style="left:749px;top:100px;font-size:12px;color:#111;line-height:16px;height:16px;letter-spacing:0.25px">Cost</div>
<svg class="a" style="left:797px;top:96px" width="79" height="22"><path d="M1 22 V7 L6.500 1.500 H78 V22 Z" fill="#FD9A49"/><path d="M0.500 22 V6.500 L6 1.500 H78" fill="none" stroke="#fff" stroke-width="1"/><path d="M0.500 5.500 L5.500 0.500 H78.5 V22" fill="none" stroke="#7a8ea8" stroke-width="1"/></svg>
<div class="t" style="left:802px;top:100px;font-size:12px;color:#111;line-height:16px;height:16px;letter-spacing:0.25px">Sub Total</div>
<svg class="a" style="left:876px;top:96px" width="62" height="22"><path d="M1 22 V7 L6.500 1.500 H61 V22 Z" fill="#FD9A49"/><path d="M0.500 22 V6.500 L6 1.500 H61" fill="none" stroke="#fff" stroke-width="1"/><path d="M0.500 5.500 L5.500 0.500 H61.5 V22" fill="none" stroke="#7a8ea8" stroke-width="1"/></svg>
<div class="t" style="left:881px;top:100px;font-size:12px;color:#111;line-height:16px;height:16px;letter-spacing:0.25px">Status</div>
<svg class="a" style="left:938px;top:96px" width="105" height="22"><path d="M1 22 V7 L6.500 1.500 H104 V22 Z" fill="#FD9A49"/><path d="M0.500 22 V6.500 L6 1.500 H104" fill="none" stroke="#fff" stroke-width="1"/><path d="M0.500 5.500 L5.500 0.500 H104.5 V22" fill="none" stroke="#7a8ea8" stroke-width="1"/></svg>
<div class="t" style="left:943px;top:100px;font-size:12px;color:#111;line-height:16px;height:16px;letter-spacing:0.25px">Flat Discounts</div>
<div class="t" style="left:17px;top:131px;">Number</div>
<div class="f" style="left:99px;top:128px;width:100px;height:24px;">ORD-369</div>
<div class="t" style="left:212px;top:131px;">Version</div>
<div class="f" style="left:264px;top:128px;width:88px;height:24px;">1</div>
<svg class="a" style="left:333px;top:130px" width="17" height="17" viewBox="0 0 17 17"><path d="M9.500 9.500L15 15" stroke="#8a8f9c" stroke-width="3.400" stroke-linecap="round"/><path d="M10.800 10.600L14.800 14.600" stroke="#f5a040" stroke-width="2.100" stroke-linecap="round"/><circle cx="6.300" cy="6.300" r="5.300" fill="#d4e9fb" stroke="#8d9cba" stroke-width="1.200"/><circle cx="6.300" cy="6.300" r="4.200" fill="none" stroke="#b4d3f2" stroke-width="1.100"/><circle cx="5.300" cy="5.300" r="2.500" fill="#f4fbff"/></svg>
<div class="t" style="left:17px;top:159px;">Description</div>
<div class="fw" style="left:99px;top:156px;width:255px;height:24px;">Kit behavior</div>
<div class="t" style="left:17px;top:187px;">Date Created</div>
<div class="f" style="left:99px;top:184px;width:100px;height:24px;">05/03/2018</div>
<div class="t" style="left:212px;top:187px;">Project</div>
<div class="fw" style="left:264px;top:184px;width:88px;height:24px;">ORD-369</div>
<svg class="a" style="left:333px;top:186px" width="17" height="17" viewBox="0 0 17 17"><path d="M9.500 9.500L15 15" stroke="#8a8f9c" stroke-width="3.400" stroke-linecap="round"/><path d="M10.800 10.600L14.800 14.600" stroke="#f5a040" stroke-width="2.100" stroke-linecap="round"/><circle cx="6.300" cy="6.300" r="5.300" fill="#d4e9fb" stroke="#8d9cba" stroke-width="1.200"/><circle cx="6.300" cy="6.300" r="4.200" fill="none" stroke="#b4d3f2" stroke-width="1.100"/><circle cx="5.300" cy="5.300" r="2.500" fill="#f4fbff"/></svg>
<div class="t" style="left:17px;top:215px;">Site</div>
<div class="f" style="left:99px;top:212px;width:100px;height:24px;letter-spacing:-0.03px">PARIS</div>
<div class="t" style="left:212px;top:215px;">Sub Orders</div>
<div class="f" style="left:289px;top:212px;width:66px;height:24px;">0</div>
<div class="t" style="left:17px;top:243px;">Project Mgr.</div>
<div class="fb" style="left:99px;top:240px;width:255px;height:24px;"></div>
<svg class="a" style="left:317px;top:242px" width="17" height="17" viewBox="0 0 17 17"><path d="M9.500 9.500L15 15" stroke="#8a8f9c" stroke-width="3.400" stroke-linecap="round"/><path d="M10.800 10.600L14.800 14.600" stroke="#f5a040" stroke-width="2.100" stroke-linecap="round"/><circle cx="6.300" cy="6.300" r="5.300" fill="#d4e9fb" stroke="#8d9cba" stroke-width="1.200"/><circle cx="6.300" cy="6.300" r="4.200" fill="none" stroke="#b4d3f2" stroke-width="1.100"/><circle cx="5.300" cy="5.300" r="2.500" fill="#f4fbff"/></svg>
<div class="t" style="left:17px;top:271px;">Sales Person</div>
<div class="fb" style="left:99px;top:268px;width:255px;height:24px;"></div>
<svg class="a" style="left:317px;top:270px" width="17" height="17" viewBox="0 0 17 17"><path d="M9.500 9.500L15 15" stroke="#8a8f9c" stroke-width="3.400" stroke-linecap="round"/><path d="M10.800 10.600L14.800 14.600" stroke="#f5a040" stroke-width="2.100" stroke-linecap="round"/><circle cx="6.300" cy="6.300" r="5.300" fill="#d4e9fb" stroke="#8d9cba" stroke-width="1.200"/><circle cx="6.300" cy="6.300" r="4.200" fill="none" stroke="#b4d3f2" stroke-width="1.100"/><circle cx="5.300" cy="5.300" r="2.500" fill="#f4fbff"/></svg>
<div class="a" style="left:334px;top:240px;width:20px;height:24px;border:1px solid #7189ab;box-shadow:inset 0 0 0 1px #e6eef8;background:linear-gradient(#ffffff,#e3ebf5 45%,#bfd0e6)"></div>
<svg class="a" style="left:338px;top:250px" width="12" height="7"><path d="M0.700 0.300h10.600l-5.300 5.200z" fill="#222"/></svg>
<div class="a" style="left:334px;top:268px;width:20px;height:24px;border:1px solid #7189ab;box-shadow:inset 0 0 0 1px #e6eef8;background:linear-gradient(#ffffff,#e3ebf5 45%,#bfd0e6)"></div>
<svg class="a" style="left:338px;top:278px" width="12" height="7"><path d="M0.700 0.300h10.600l-5.300 5.200z" fill="#222"/></svg>
<div class="t" style="left:17px;top:299px;">Labor Planner</div>
<div class="fw" style="left:99px;top:296px;width:255px;height:24px;"></div>
<svg class="a" style="left:334px;top:298px" width="17" height="17" viewBox="0 0 17 17"><path d="M9.500 9.500L15 15" stroke="#8a8f9c" stroke-width="3.400" stroke-linecap="round"/><path d="M10.800 10.600L14.800 14.600" stroke="#f5a040" stroke-width="2.100" stroke-linecap="round"/><circle cx="6.300" cy="6.300" r="5.300" fill="#d4e9fb" stroke="#8d9cba" stroke-width="1.200"/><circle cx="6.300" cy="6.300" r="4.200" fill="none" stroke="#b4d3f2" stroke-width="1.100"/><circle cx="5.300" cy="5.300" r="2.500" fill="#f4fbff"/></svg>
<div class="a" style="left:366px;top:131px;width:215px;height:98px;border:1px solid #9c9c9c"></div>
<div class="t b" style="left:371px;top:126px;background:#fff;padding:0 2px;">Charge Duration</div>
<div class="t" style="left:369px;top:144px;">Start Date/Time</div>
<div class="f" style="left:458px;top:141px;width:120px;height:24px;">05/07/2018</div>
<div class="t" style="left:369px;top:173px;">End Date/Time</div>
<div class="f" style="left:458px;top:170px;width:120px;height:24px;">05/11/2018</div>
<div class="t" style="left:369px;top:202px;">Duration</div>
<div class="f" style="left:458px;top:199px;width:85px;height:24px;">5d</div>
<div class="t" style="left:588px;top:131px;">Conv. Date</div>
<div class="f" style="left:655px;top:126px;width:89px;height:24px;"></div>
<div class="cbf" style="left:589px;top:160px"></div><svg class="a" style="left:589px;top:160px" width="13" height="13" viewBox="0 0 13 13"><path d="M2.800 6.200L4.800 6.200L5.400 7.700L8.700 2.900L10.100 2.900L5.700 10L4.300 10Z" fill="#17212b"/></svg>
<div class="t" style="left:606px;top:160px;">Show Suggestions</div>
<div class="cbf" style="left:589px;top:180px;width:13px;height:13px;border-color:#b9cde8;box-shadow:inset 1px 1px 0 #fff;background:linear-gradient(135deg,#ffffff 30%,#fde6d6 55%,#f5b48a 100%)"></div>
<div class="t" style="left:606px;top:180px;color:#9b9b9b">Event Pricing</div>
<div class="cbf" style="left:589px;top:200px"></div><svg class="a" style="left:589px;top:200px" width="13" height="13" viewBox="0 0 13 13"><path d="M2.800 6.200L4.800 6.200L5.400 7.700L8.700 2.900L10.100 2.900L5.700 10L4.300 10Z" fill="#17212b"/></svg>
<div class="t" style="left:606px;top:200px;">Day-Week-Month Pricing</div>
<div class="a" style="left:752px;top:148px;width:290px;height:83px;border:1px solid #7b9ad6;background:#c5daf2"></div>
<div class="a" style="left:754px;top:151px;width:286px;height:77px;border:1px solid #b8c4d6;background:#fff"></div>
<svg class="a" style="left:754px;top:126px" width="90" height="22"><path d="M2 22 V7.500 L7.500 2 H89 V22 Z" fill="#C74E2E"/><path d="M1.500 22 V7 L7 1.500 H89" fill="none" stroke="#fff" stroke-width="1"/><path d="M0.500 22 V6.500 L6.500 0.500 H89.5 V22" fill="none" stroke="#5f86d6" stroke-width="1"/></svg>
<div class="a" style="left:755px;top:148px;width:88px;height:2px;background:#cfe0f5"></div>
<div class="t b" style="left:759px;top:130px;font-size:12px;color:#fff;line-height:16px;height:16px;letter-spacing:-0.05px">Comments</div>
<svg class="a" style="left:844px;top:126px" width="120" height="22"><path d="M1 22 V7 L6.500 1.500 H119 V22 Z" fill="#FD9A49"/><path d="M0.500 22 V6.500 L6 1.500 H119" fill="none" stroke="#fff" stroke-width="1"/><path d="M0.500 5.500 L5.500 0.500 H119.5 V22" fill="none" stroke="#7a8ea8" stroke-width="1"/></svg>
<div class="t" style="left:849px;top:130px;font-size:12px;color:#111;line-height:16px;height:16px;letter-spacing:0.25px">LaborComments</div>
<div class="a" style="left:761px;top:154px;width:270px;height:69px;border:2px solid #7b828b;background:#EEEEEE"></div>
<svg class="a" style="left:1010px;top:156px" width="17" height="17" viewBox="0 0 17 17"><path d="M9.500 9.500L15 15" stroke="#8a8f9c" stroke-width="3.400" stroke-linecap="round"/><path d="M10.800 10.600L14.800 14.600" stroke="#f5a040" stroke-width="2.100" stroke-linecap="round"/><circle cx="6.300" cy="6.300" r="5.300" fill="#d4e9fb" stroke="#8d9cba" stroke-width="1.200"/><circle cx="6.300" cy="6.300" r="4.200" fill="none" stroke="#b4d3f2" stroke-width="1.100"/><circle cx="5.300" cy="5.300" r="2.500" fill="#f4fbff"/></svg>
<div class="t" style="left:362px;top:242px;">Customer</div>
<div class="f" style="left:421px;top:236px;width:160px;height:24px;letter-spacing:-0.03px">LG ELECTRONICS</div>
<svg class="a" style="left:561px;top:237px" width="17" height="17" viewBox="0 0 17 17"><path d="M9.500 9.500L15 15" stroke="#8a8f9c" stroke-width="3.400" stroke-linecap="round"/><path d="M10.800 10.600L14.800 14.600" stroke="#f5a040" stroke-width="2.100" stroke-linecap="round"/><circle cx="6.300" cy="6.300" r="5.300" fill="#d4e9fb" stroke="#8d9cba" stroke-width="1.200"/><circle cx="6.300" cy="6.300" r="4.200" fill="none" stroke="#b4d3f2" stroke-width="1.100"/><circle cx="5.300" cy="5.300" r="2.500" fill="#f4fbff"/></svg>
<div class="t" style="left:362px;top:270px;">Contact</div>
<div class="f" style="left:421px;top:265px;width:160px;height:24px;letter-spacing:-0.03px">TOM HIDDLESTON</div>
<svg class="a" style="left:561px;top:266px" width="17" height="17" viewBox="0 0 17 17"><path d="M9.500 9.500L15 15" stroke="#8a8f9c" stroke-width="3.400" stroke-linecap="round"/><path d="M10.800 10.600L14.800 14.600" stroke="#f5a040" stroke-width="2.100" stroke-linecap="round"/><circle cx="6.300" cy="6.300" r="5.300" fill="#d4e9fb" stroke="#8d9cba" stroke-width="1.200"/><circle cx="6.300" cy="6.300" r="4.200" fill="none" stroke="#b4d3f2" stroke-width="1.100"/><circle cx="5.300" cy="5.300" r="2.500" fill="#f4fbff"/></svg>
<div class="t" style="left:362px;top:299px;">Contact Tel #</div>
<div class="f" style="left:451px;top:294px;width:129px;height:24px;">+44-17-5349-1585</div>
<div class="t" style="left:587px;top:241px;">Bill To</div>
<div class="f" style="left:654px;top:236px;width:160px;height:24px;letter-spacing:-0.03px">LG ELECTRONICS</div>
<svg class="a" style="left:794px;top:237px" width="17" height="17" viewBox="0 0 17 17"><path d="M9.500 9.500L15 15" stroke="#8a8f9c" stroke-width="3.400" stroke-linecap="round"/><path d="M10.800 10.600L14.800 14.600" stroke="#f5a040" stroke-width="2.100" stroke-linecap="round"/><circle cx="6.300" cy="6.300" r="5.300" fill="#d4e9fb" stroke="#8d9cba" stroke-width="1.200"/><circle cx="6.300" cy="6.300" r="4.200" fill="none" stroke="#b4d3f2" stroke-width="1.100"/><circle cx="5.300" cy="5.300" r="2.500" fill="#f4fbff"/></svg>
<div class="t" style="left:587px;top:270px;">Bill Contact</div>
<div class="f" style="left:654px;top:265px;width:160px;height:24px;letter-spacing:-0.03px">TOM HIDDLESTON</div>
<svg class="a" style="left:794px;top:266px" width="17" height="17" viewBox="0 0 17 17"><path d="M9.500 9.500L15 15" stroke="#8a8f9c" stroke-width="3.400" stroke-linecap="round"/><path d="M10.800 10.600L14.800 14.600" stroke="#f5a040" stroke-width="2.100" stroke-linecap="round"/><circle cx="6.300" cy="6.300" r="5.300" fill="#d4e9fb" stroke="#8d9cba" stroke-width="1.200"/><circle cx="6.300" cy="6.300" r="4.200" fill="none" stroke="#b4d3f2" stroke-width="1.100"/><circle cx="5.300" cy="5.300" r="2.500" fill="#f4fbff"/></svg>
<div class="t" style="left:587px;top:299px;">Language</div>
<div class="f" style="left:654px;top:294px;width:90px;height:24px;"></div>
<svg class="a" style="left:724px;top:296px" width="17" height="17" viewBox="0 0 17 17"><path d="M9.500 9.500L15 15" stroke="#8a8f9c" stroke-width="3.400" stroke-linecap="round"/><path d="M10.800 10.600L14.800 14.600" stroke="#f5a040" stroke-width="2.100" stroke-linecap="round"/><circle cx="6.300" cy="6.300" r="5.300" fill="#d4e9fb" stroke="#8d9cba" stroke-width="1.200"/><circle cx="6.300" cy="6.300" r="4.200" fill="none" stroke="#b4d3f2" stroke-width="1.100"/><circle cx="5.300" cy="5.300" r="2.500" fill="#f4fbff"/></svg>
<div class="t" style="left:826px;top:248px;">Document Folder:</div>
<div class="a" style="left:1014px;top:240px;width:49px;height:23px;border:1px solid #c4c4c4;background:#fff"></div>
<div class="a" style="left:1024px;top:242px;width:30px;height:19px;border:1px solid #6a6a6a;background:#fff;font-size:10.5px;line-height:17px;text-align:center;color:#000;letter-spacing:-0.3px;text-shadow:0 0 0.3px #000">Reset</div>
<div class="a" style="left:826px;top:264px;width:216px;height:48px;border:2px solid #7b828b;background:#EEEEEE"></div>
<div class="a" style="left:8px;top:356px;width:1172px;height:300px;background:#c5daf2;border-top:1px solid #7b9ad6;border-left:1px solid #7b9ad6;border-right:1px solid #7a8ea8;border-bottom:1px solid #7a8ea8"></div>
<div class="a" style="left:9px;top:357px;width:1170px;height:1px;background:#fff"></div>
<div class="a" style="left:10px;top:360px;width:1167px;height:293px;background:#fff"></div>
<div class="a" style="left:10px;top:360px;width:1166px;height:34px;border:1px solid #a9a9a9;background:#fff"></div>
<div class="a" style="left:10px;top:395px;width:1166px;height:257px;border:1px solid #a9a9a9;background:#fff"></div>
<svg class="a" style="left:10px;top:334px" width="67" height="22"><path d="M2 22 V7.500 L7.500 2 H66 V22 Z" fill="#C74E2E"/><path d="M1.500 22 V7 L7 1.500 H66" fill="none" stroke="#fff" stroke-width="1"/><path d="M0.500 22 V6.500 L6.500 0.500 H66.5 V22" fill="none" stroke="#5f86d6" stroke-width="1"/></svg>
<div class="a" style="left:11px;top:356px;width:65px;height:2px;background:#cfe0f5"></div>
<div class="t b" style="left:16px;top:338px;font-size:12px;color:#fff;line-height:16px;height:16px;letter-spacing:-0.05px">Item(s)</div>
<svg class="a" style="left:77px;top:334px" width="58" height="22"><path d="M1 22 V7 L6.500 1.500 H57 V22 Z" fill="#FD9A49"/><path d="M0.500 22 V6.500 L6 1.500 H57" fill="none" stroke="#fff" stroke-width="1"/><path d="M0.500 5.500 L5.500 0.500 H57.5 V22" fill="none" stroke="#7a8ea8" stroke-width="1"/></svg>
<div class="t" style="left:82px;top:338px;font-size:12px;color:#111;line-height:16px;height:16px;letter-spacing:0.25px">Labor</div>
<div class="t" style="left:45px;top:369px;color:#333">Search :</div>
<div class="t" style="left:120px;top:369px;color:#333">Asset</div>
<div class="fw" style="left:162px;top:365px;width:120px;height:24px;"></div>
<div class="t" style="left:362px;top:369px;color:#333">Product</div>
<div class="fw" style="left:412px;top:365px;width:195px;height:24px;"></div>
<div class="t" style="left:625px;top:369px;color:#333;font-size:11px">Qty</div>
<div class="fw" style="left:647px;top:365px;width:40px;height:24px;">1</div>
<div class="cbf" style="left:707px;top:371px;background:linear-gradient(135deg,#ffffff 30%,#fde6d6 55%,#f8bc94 100%)"></div>
<div class="t" style="left:724px;top:371px;color:#333">Update existing lines</div>
<div class="a" style="left:12px;top:397px;width:1162px;height:253px;border:1px solid #7a8ea8;background:#fff"></div>
<div class="a" style="left:13px;top:398px;width:1160px;height:20px;background:#f5693a"></div>
<div class="hd" style="left:13px;width:14px;">T</div>
<div class="hd" style="left:28px;width:14px;">C</div>
<div class="hd" style="left:43px;width:14px;">X</div>
<div class="hd" style="left:58px;width:14px;">M</div>
<div class="hd" style="left:73px;width:14px;">S</div>
<div class="hd" style="left:88px;width:19px;">I.C</div>
<div class="hd" style="left:108px;width:19px;">I....</div>
<div class="hd" style="left:128px;width:19px;">I.I</div>
<div class="hd" style="left:148px;width:74px;">Status</div>
<div class="hd" style="left:223px;width:19px;">L</div>
<div class="hd" style="left:243px;width:44px;">Action</div>
<div class="hd" style="left:288px;width:99px;">Product ID</div>
<div class="hd" style="left:388px;width:169px;">Description</div>
<div class="hd" style="left:558px;width:54px;">Duration</div>
<div class="hd" style="left:613px;width:29px;">Qty</div>
<div class="hd" style="left:643px;width:99px;">Shipping Site</div>
<div class="hd" style="left:743px;width:99px;">Returning Site</div>
<div class="hd" style="left:843px;width:39px;">Unit</div>
<div class="hd" style="left:883px;width:89px;">Day/Each Price</div>
<div class="hd" style="left:973px;width:69px;">Week Price</div>
<div class="hd" style="left:1043px;width:69px;">Month Price</div>
<div class="hd" style="left:1113px;width:54px;">Discount</div>
<div class="hd" style="left:1168px;width:5px;border-right:none;"></div>
<div class="a" style="left:13px;top:418px;width:1160px;height:18px;background:#FD9A49"></div>
<div class="a" style="left:13px;top:436px;width:1160px;height:1px;background:#c47a45"></div>
<div class="a" style="left:13px;top:455px;width:1160px;height:1px;background:#c47a45"></div>
<div class="a" style="left:13px;top:474px;width:1160px;height:1px;background:#c47a45"></div>
<div class="a" style="left:27px;top:418px;width:1px;height:57px;background:#c47a45"></div>
<div class="a" style="left:42px;top:418px;width:1px;height:57px;background:#c47a45"></div>
<div class="a" style="left:57px;top:418px;width:1px;height:57px;background:#c47a45"></div>
<div class="a" style="left:72px;top:418px;width:1px;height:57px;background:#c47a45"></div>
<div class="a" style="left:87px;top:418px;width:1px;height:57px;background:#c47a45"></div>
<div class="a" style="left:107px;top:418px;width:1px;height:57px;background:#c47a45"></div>
<div class="a" style="left:127px;top:418px;width:1px;height:57px;background:#c47a45"></div>
<div class="a" style="left:147px;top:418px;width:1px;height:57px;background:#c47a45"></div>
<div class="a" style="left:222px;top:418px;width:1px;height:57px;background:#c47a45"></div>
<div class="a" style="left:242px;top:418px;width:1px;height:57px;background:#c47a45"></div>
<div class="a" style="left:287px;top:418px;width:1px;height:57px;background:#c47a45"></div>
<div class="a" style="left:387px;top:418px;width:1px;height:57px;background:#c47a45"></div>
<div class="a" style="left:557px;top:418px;width:1px;height:57px;background:#c47a45"></div>
<div class="a" style="left:612px;top:418px;width:1px;height:57px;background:#c47a45"></div>
<div class="a" style="left:642px;top:418px;width:1px;height:57px;background:#c47a45"></div>
<div class="a" style="left:742px;top:418px;width:1px;height:57px;background:#c47a45"></div>
<div class="a" style="left:842px;top:418px;width:1px;height:57px;background:#c47a45"></div>
<div class="a" style="left:882px;top:418px;width:1px;height:57px;background:#c47a45"></div>
<div class="a" style="left:972px;top:418px;width:1px;height:57px;background:#c47a45"></div>
<div class="a" style="left:1042px;top:418px;width:1px;height:57px;background:#c47a45"></div>
<div class="a" style="left:1112px;top:418px;width:1px;height:57px;background:#c47a45"></div>
<div class="a" style="left:1167px;top:418px;width:1px;height:57px;background:#c47a45"></div>
<div class="cb" style="left:14px;top:421px"></div>
<div class="cb" style="left:29px;top:421px"></div>
<div class="cb" style="left:44px;top:421px"></div>
<div class="cb" style="left:59px;top:421px"></div>
<div class="cb" style="left:74px;top:421px"></div>
<div class="cb" style="left:91px;top:421px"></div>
<div class="cb" style="left:111px;top:421px"></div>
<div class="cb" style="left:131px;top:421px"></div>
<svg class="a" style="left:14px;top:421px" width="13" height="13" viewBox="0 0 13 13"><path d="M2.800 6.200L4.800 6.200L5.400 7.700L8.700 2.900L10.100 2.900L5.700 10L4.300 10Z" fill="#17212b"/></svg>
<div class="cb" style="left:226px;top:421px"></div>
<div class="c" style="left:149px;top:417px;width:73px;">Pool</div>
<div class="c" style="left:244px;top:417px;width:43px;">Rent</div>
<div class="c" style="left:289px;top:417px;width:98px;">LG SERIAL KIT-2</div>
<div class="a" style="left:388px;top:418px;width:169px;height:18px;border:1px solid #e62a10"></div>
<div class="c" style="left:396px;top:417px;width:174px;font-weight:bold;letter-spacing:0;transform:scaleX(.925);transform-origin:0 0"><span style="font-weight:normal">-</span>&nbsp; LG SERIAL KIT-2</div>
<div class="c" style="left:559px;top:417px;width:53px;">5d</div>
<div class="c" style="left:613px;top:417px;width:28px;text-align:right">1</div>
<div class="c" style="left:644px;top:417px;width:98px;">ML EUROPE</div>
<div class="c" style="left:744px;top:417px;width:98px;">ML EUROPE</div>
<div class="c" style="left:844px;top:417px;width:38px;">Day</div>
<div class="c" style="left:883px;top:417px;width:88px;text-align:right">0.00</div>
<div class="c" style="left:973px;top:417px;width:68px;text-align:right">0.00</div>
<div class="c" style="left:1043px;top:417px;width:68px;text-align:right">0.00</div>
<div class="c" style="left:1113px;top:417px;width:53px;text-align:right">0.00</div>
<div class="cbw" style="left:14px;top:440px"></div>
<div class="cbw" style="left:29px;top:440px"></div>
<div class="cbw" style="left:44px;top:440px"></div>
<div class="cbw" style="left:59px;top:440px"></div>
<div class="cbw" style="left:74px;top:440px"></div>
<div class="cbw" style="left:91px;top:440px"></div>
<div class="cbw" style="left:111px;top:440px"></div>
<div class="cbw" style="left:131px;top:440px"></div>
<svg class="a" style="left:14px;top:440px" width="13" height="13" viewBox="0 0 13 13"><path d="M2.800 6.200L4.800 6.200L5.400 7.700L8.700 2.900L10.100 2.900L5.700 10L4.300 10Z" fill="#17212b"/></svg>
<div class="cbw" style="left:226px;top:440px"></div>
<div class="c" style="left:149px;top:436px;width:73px;"></div>
<div class="c" style="left:244px;top:436px;width:43px;">Rent</div>
<div class="c" style="left:289px;top:436px;width:98px;">LG STAR</div>
<div class="c" style="left:401px;top:436px;width:155px;font-style:italic;letter-spacing:0.15px">LG STAR</div>
<div class="c" style="left:559px;top:436px;width:53px;"></div>
<div class="c" style="left:613px;top:436px;width:28px;text-align:right">2</div>
<div class="c" style="left:644px;top:436px;width:98px;">ML EUROPE</div>
<div class="c" style="left:744px;top:436px;width:98px;">ML EUROPE</div>
<div class="c" style="left:844px;top:436px;width:38px;"></div>
<div class="cbw" style="left:14px;top:459px"></div>
<div class="cbw" style="left:29px;top:459px"></div>
<div class="cbw" style="left:44px;top:459px"></div>
<div class="cbw" style="left:59px;top:459px"></div>
<div class="cbw" style="left:74px;top:459px"></div>
<div class="cbw" style="left:91px;top:459px"></div>
<div class="cbw" style="left:111px;top:459px"></div>
<div class="cbw" style="left:131px;top:459px"></div>
<svg class="a" style="left:14px;top:459px" width="13" height="13" viewBox="0 0 13 13"><path d="M2.800 6.200L4.800 6.200L5.400 7.700L8.700 2.900L10.100 2.900L5.700 10L4.300 10Z" fill="#17212b"/></svg>
<div class="cbw" style="left:226px;top:459px"></div>
<div class="c" style="left:149px;top:455px;width:73px;"></div>
<div class="c" style="left:244px;top:455px;width:43px;">Rent</div>
<div class="c" style="left:289px;top:455px;width:98px;">LG WM</div>
<div class="c" style="left:401px;top:455px;width:155px;font-style:italic;letter-spacing:0.15px">LG WM</div>
<div class="c" style="left:559px;top:455px;width:53px;"></div>
<div class="c" style="left:613px;top:455px;width:28px;text-align:right">2</div>
<div class="c" style="left:644px;top:455px;width:98px;">ML EUROPE</div>
<div class="c" style="left:744px;top:455px;width:98px;">ML EUROPE</div>
<div class="c" style="left:844px;top:455px;width:38px;"></div>
<div class="a" style="left:13px;top:632px;width:1160px;height:16px;background:#eeeeee;border-top:1px solid #6f8aa8;border-bottom:1px solid #6f8aa8;box-shadow:inset 0 1px 0 #c5daf2"></div>
<div class="a" style="left:13px;top:648px;width:1143px;height:1px;background:#b9cde6"></div>
<div class="a" style="left:13px;top:633px;width:16px;height:15px;background:#efefef;border:1px solid #c5cedb;border-top:none"></div>
<svg class="a" style="left:18px;top:637px" width="6" height="9"><path d="M5 0v8.500L0.800 4.250z" fill="#222"/></svg>
<div class="a" style="left:1156px;top:634px;width:16px;height:14px;background:#efefef;border:1px solid #6f8aa8;border-top:none"></div>
<svg class="a" style="left:1162px;top:637px" width="6" height="9"><path d="M0.500 0v9L5 4.500z" fill="#222"/></svg>
<div class="a" style="left:28px;top:632px;width:564px;height:16px;border:1px solid #f9bc00;box-shadow:inset 0 0 0 1px #e9a377;background:linear-gradient(#efc3a2,#e8a97f 50%,#e39863)"></div>
<div class="a" style="left:306px;top:636px;width:7px;height:8px;background:repeating-linear-gradient(90deg,#a89488 0 1px,#f6dcc8 1px 2px)"></div>
<div class="t b" style="left:70px;top:663px;font-size:14px;line-height:16px;height:16px;color:#1a1a1a">Items</div>
<div class="f" style="left:120px;top:658px;width:100px;height:24px;"></div>
<div class="t b" style="left:235px;top:663px;font-size:14px;line-height:16px;height:16px;color:#1a1a1a">Labor</div>
<div class="f" style="left:287px;top:658px;width:100px;height:24px;"></div>
<div class="t b" style="left:446px;top:663px;font-size:14px;line-height:16px;height:16px;color:#1a1a1a">Sub Total</div>
<div class="f" style="left:525px;top:658px;width:100px;height:24px;"></div>
<div class="t b" style="left:636px;top:663px;font-size:14px;line-height:16px;height:16px;color:#1a1a1a">Tax</div>
<div class="f" style="left:670px;top:658px;width:100px;height:24px;"></div>
<div class="a" style="left:813px;top:658px;width:88px;height:24px;border:1px solid #c8c8c8;background:#fff"></div>
<div class="t b" style="left:843px;top:663px;font-size:14px;line-height:16px;height:16px;color:#1a1a1a">Total</div>
<div class="f" style="left:906px;top:658px;width:100px;height:24px;font-weight:bold;font-size:14px;padding-top:4px;line-height:16px">0.00</div>
<div class="a" style="left:9px;top:693px;width:1170px;height:24px;border:1px solid #c4c4c4;border-top:1px solid #7e7e7e;border-left-color:#8a8a8a;box-shadow:inset 0 1px 0 #b8b8b8;background:#fff"></div>
</body></html>
